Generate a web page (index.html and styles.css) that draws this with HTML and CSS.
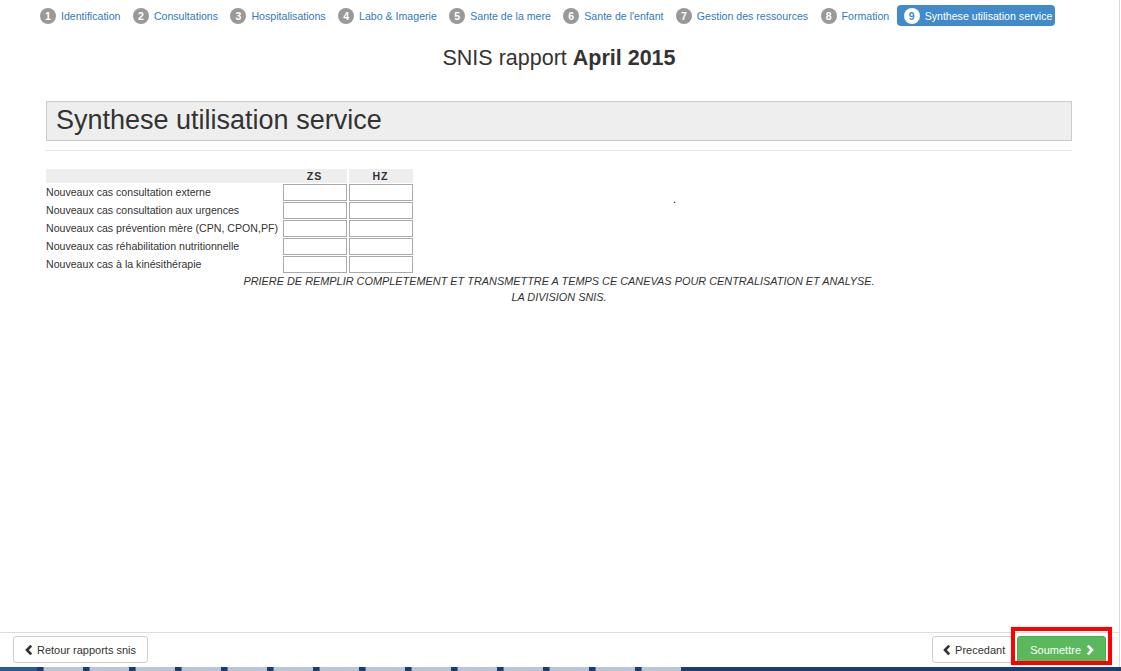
FILE: index.html
```html
<!DOCTYPE html>
<html lang="fr">
<head>
<meta charset="utf-8">
<title>SNIS rapport</title>
<link rel="stylesheet" href="styles.css">
</head>
<body>
<div class="page">
  <div class="content">
    <ul class="steps">
      <li class="step"><span class="num">1</span><span class="label">Identification</span></li>
      <li class="step"><span class="num">2</span><span class="label">Consultations</span></li>
      <li class="step"><span class="num">3</span><span class="label">Hospitalisations</span></li>
      <li class="step"><span class="num">4</span><span class="label">Labo &amp; Imagerie</span></li>
      <li class="step"><span class="num">5</span><span class="label">Sante de la mere</span></li>
      <li class="step"><span class="num">6</span><span class="label">Sante de l'enfant</span></li>
      <li class="step"><span class="num">7</span><span class="label">Gestion des ressources</span></li>
      <li class="step"><span class="num">8</span><span class="label">Formation</span></li>
      <li class="step active"><span class="num">9</span><span class="label">Synthese utilisation service</span></li>
    </ul>

    <div class="container">
      <h3 class="report-title">SNIS rapport <strong>April 2015</strong></h3>

      <div class="section-head">Synthese utilisation service</div>
      <hr class="rule">

      <div class="form-area">
        <div class="grid">
          <div class="gh"></div>
          <div class="gh col">ZS</div>
          <div class="gh col">HZ</div>

          <div class="lbl">Nouveaux cas consultation externe</div>
          <input class="cell" type="text">
          <input class="cell" type="text">

          <div class="lbl">Nouveaux cas consultation aux urgences</div>
          <input class="cell" type="text">
          <input class="cell" type="text">

          <div class="lbl">Nouveaux cas prévention mère (CPN, CPON,PF)</div>
          <input class="cell" type="text">
          <input class="cell" type="text">

          <div class="lbl">Nouveaux cas réhabilitation nutritionnelle</div>
          <input class="cell" type="text">
          <input class="cell" type="text">

          <div class="lbl">Nouveaux cas à la kinésithérapie</div>
          <input class="cell" type="text">
          <input class="cell" type="text">
        </div>
        <div class="dot">.</div>
      </div>

      <div class="notice">
        <p>PRIERE DE REMPLIR COMPLETEMENT ET TRANSMETTRE A TEMPS CE CANEVAS POUR CENTRALISATION ET ANALYSE.</p>
        <p>LA DIVISION SNIS.</p>
      </div>
    </div>
  </div>

  <div class="footer">
    <button class="btn btn-back"><svg class="chev" viewBox="0 0 8 10" width="8" height="10"><path d="M6.2 0.6 L2 5 L6.2 9.4" fill="none" stroke="#333" stroke-width="2.6"/></svg>Retour rapports snis</button>
    <div class="right-btns">
      <button class="btn btn-prev"><svg class="chev" viewBox="0 0 8 10" width="8" height="10"><path d="M6.2 0.6 L2 5 L6.2 9.4" fill="none" stroke="#333" stroke-width="2.6"/></svg>Precedant</button>
      <span class="annot"><button class="btn btn-success">Soumettre<svg class="chev after" viewBox="0 0 8 10" width="8" height="10"><path d="M1.8 0.6 L6 5 L1.8 9.4" fill="none" stroke="#fff" stroke-width="2.6"/></svg></button></span>
    </div>
  </div>
</div>
<div class="taskbar">
  <span class="start"></span>
  <span class="tab"></span><span class="tab"></span><span class="tab"></span><span class="tab"></span>
  <span class="tab"></span><span class="tab"></span><span class="tab"></span><span class="tab"></span>
  <span class="tab"></span><span class="tab"></span><span class="tab"></span><span class="tab"></span>
  <span class="tab"></span><span class="tab"></span>
</div>
</body>
</html>
```
FILE: styles.css
```css
* { box-sizing: border-box; }
html, body { margin: 0; padding: 0; height: 100%; }
body {
  font-family: "Liberation Sans", Arial, sans-serif;
  color: #333;
  background: #fff;
  overflow: hidden;
  display: flex;
  flex-direction: column;
}
.page {
  flex: 1;
  display: flex;
  flex-direction: column;
  border-right: 1px solid #d8d8d8;
  margin-right: 1px;
  min-height: 0;
}
.content { flex: 1; }

/* wizard steps */
.steps {
  list-style: none;
  margin: 0;
  padding: 5px 0 0 40px;
  display: flex;
  align-items: center;
  gap: 12.4px;
  font-size: 10.6px;
}
.step {
  display: flex;
  align-items: center;
  height: 21px;
  color: #337ab7;
}
.step .num {
  width: 16px;
  height: 16px;
  border-radius: 50%;
  background: #999;
  color: #fff;
  font-weight: bold;
  font-size: 10.5px;
  display: flex;
  align-items: center;
  justify-content: center;
  margin-right: 5px;
}
.step.active {
  background: #428bca;
  color: #fff;
  border-radius: 4px;
  padding: 0 3px 0 7px;
  margin-left: -5px;
}
.step.active .num {
  background: #fff;
  color: #428bca;
}

/* main */
.container {
  margin: 0 47px 0 46px;
}
.report-title {
  margin: 20px 0 0;
  text-align: center;
  font-size: 21.5px;
  font-weight: normal;
  line-height: 24px;
  color: #333;
}
.report-title strong { font-weight: bold; }

.section-head {
  margin-top: 31px;
  height: 40px;
  background: #eee;
  border: 1px solid #ccc;
  font-size: 27px;
  line-height: 37px;
  padding-left: 9px;
  color: #333;
}
.rule {
  margin: 9px 0 0;
  border: 0;
  border-top: 1px solid #e3e3e3;
}

.form-area {
  margin-top: 18px;
  display: flex;
  align-items: flex-start;
}
.grid {
  display: grid;
  grid-template-columns: 235px 64px 64px;
  column-gap: 2px;
  row-gap: 1px;
  font-size: 10.6px;
}
.gh {
  background: #eee;
  height: 14px;
  line-height: 14px;
}
.gh.col {
  text-align: center;
  font-weight: bold;
  letter-spacing: 1px;
  padding-right: 1px;
}
.grid .gh:first-child { margin-right: -2px; }
.grid .gh:last-of-type { margin-right: -1px; }
.lbl {
  height: 17px;
  line-height: 17px;
  white-space: nowrap;
}
.cell {
  width: 64px;
  height: 17px;
  margin: 0;
  padding: 0 2px;
  border: 1px solid #a9a9a9;
  background: #fff;
  font-size: 11px;
  font-family: inherit;
}
.dot {
  margin-left: 260px;
  padding-top: 23px;
  font-size: 11px;
  line-height: 14px;
  color: #000;
}

.notice {
  text-align: center;
  font-style: italic;
  font-size: 10.9px;
  line-height: 16px;
  margin-top: 0;
}
.notice p { margin: 0; }

/* footer */
.footer {
  border-top: 1px solid #ddd;
  height: 35px;
  padding: 3px 13px 0 13px;
  display: flex;
  justify-content: space-between;
  align-items: flex-start;
}
.right-btns {
  display: flex;
  gap: 2px;
}
.btn {
  height: 27px;
  padding: 0 11px;
  border: 1px solid #ccc;
  border-radius: 3px;
  background: #fff;
  color: #333;
  font-family: "Liberation Sans", Arial, sans-serif;
  font-size: 11px;
  display: flex;
  align-items: center;
  cursor: pointer;
}
.btn-back { padding: 0 11px 0 11px; }
.btn-prev { padding: 0 9px 0 10px; }
.btn-prev .chev { margin-right: 3px; }
.btn .chev { margin-right: 4px; }
.btn .chev.after { margin: 0 0 0 5px; }
.btn-success {
  background: #5cb85c;
  border-color: #4cae4c;
  color: #fff;
  padding: 0 11px 0 12px;
}
.annot {
  position: relative;
  display: block;
}
.annot::after {
  content: "";
  position: absolute;
  top: -9px;
  bottom: -2px;
  left: -6px;
  right: -6px;
  border: 4px solid #f00;
  pointer-events: none;
}

/* taskbar */
.taskbar {
  height: 4px;
  background: #1d3c6e;
  display: flex;
  gap: 6px;
  flex-shrink: 0;
}
.taskbar .start { width: 37px; background: #2d5a96; }
.taskbar .tab {
  width: 40px;
  background: #b8c6d8;
  border-left: 1px solid #5a77a0;
}
```
